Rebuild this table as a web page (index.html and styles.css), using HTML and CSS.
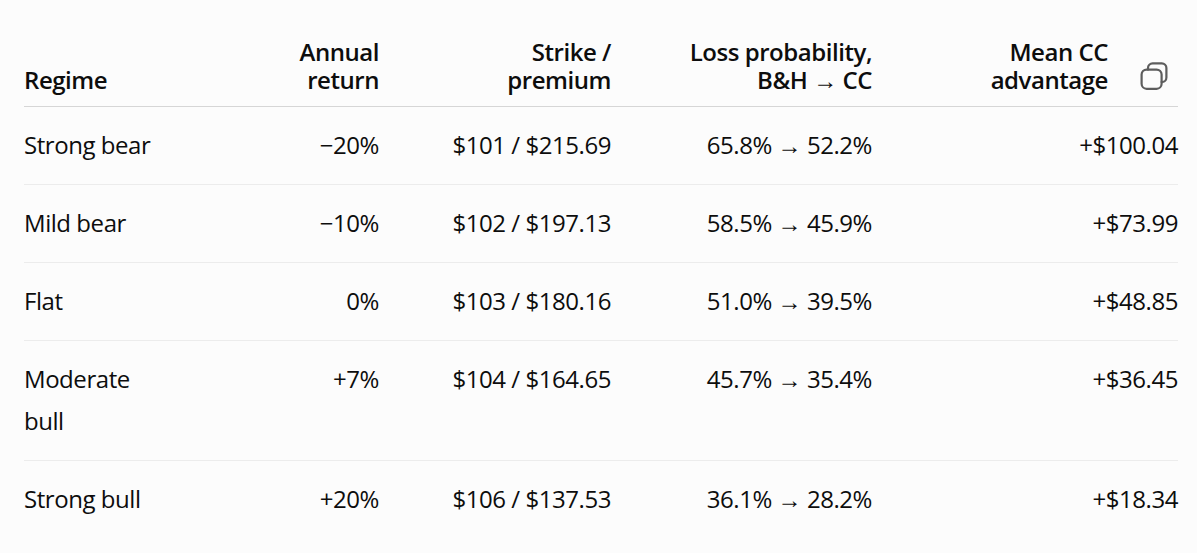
FILE: index.html
```html
<!DOCTYPE html>
<html lang="en">
<head>
<meta charset="utf-8">
<title>Covered call regimes</title>
<link rel="stylesheet" href="styles.css">
</head>
<body>
<div class="table-wrap">
  <table class="data-table">
    <colgroup>
      <col class="col-regime">
      <col class="col-return">
      <col class="col-strike">
      <col class="col-loss">
      <col class="col-adv">
    </colgroup>
    <thead>
      <tr>
        <th class="left">Regime</th>
        <th>Annual<br>return</th>
        <th>Strike /<br>premium</th>
        <th>Loss probability,<br>B&amp;H → CC</th>
        <th class="last">Mean CC<br>advantage</th>
      </tr>
    </thead>
    <tbody>
      <tr>
        <td class="left">Strong bear</td>
        <td>−20%</td>
        <td>$101 / $215.69</td>
        <td>65.8% → 52.2%</td>
        <td>+$100.04</td>
      </tr>
      <tr>
        <td class="left">Mild bear</td>
        <td>−10%</td>
        <td>$102 / $197.13</td>
        <td>58.5% → 45.9%</td>
        <td>+$73.99</td>
      </tr>
      <tr>
        <td class="left">Flat</td>
        <td>0%</td>
        <td>$103 / $180.16</td>
        <td>51.0% → 39.5%</td>
        <td>+$48.85</td>
      </tr>
      <tr>
        <td class="left">Moderate bull</td>
        <td>+7%</td>
        <td>$104 / $164.65</td>
        <td>45.7% → 35.4%</td>
        <td>+$36.45</td>
      </tr>
      <tr>
        <td class="left">Strong bull</td>
        <td>+20%</td>
        <td>$106 / $137.53</td>
        <td>36.1% → 28.2%</td>
        <td>+$18.34</td>
      </tr>
    </tbody>
  </table>
  <button class="copy-btn" type="button" aria-label="Copy table">
    <svg width="28" height="28" viewBox="0 0 28 28" fill="none" stroke="#5d5d5d" stroke-width="2.2" stroke-linecap="round" stroke-linejoin="round">
      <rect x="1.6" y="7.6" width="20" height="19.2" rx="5"/>
      <path d="M8 7.6 V6 a4.6 4.6 0 0 1 4.6 -4.6 H21.8 a4.6 4.6 0 0 1 4.6 4.6 V15.4 a4.6 4.6 0 0 1 -4.6 4.6 H21.6"/>
    </svg>
  </button>
</div>
</body>
</html>
```

FILE: styles.css
```css
html, body {
  margin: 0;
  padding: 0;
  background: #fcfcfc;
}

body {
  font-family: "Open Sans", "Noto Sans", "Liberation Sans", sans-serif;
  color: #0d0d0d;
  font-size: 24px;
  letter-spacing: -0.45px;
}

.table-wrap {
  position: relative;
  padding: 26px 19px 0 24px;
}

.data-table {
  width: 100%;
  border-collapse: collapse;
  table-layout: fixed;
}

.col-regime { width: 156px; }
.col-return { width: 199px; }
.col-strike { width: 232px; }
.col-loss { width: 261px; }

.data-table th {
  font-weight: 600;
  line-height: 28px;
  text-align: right;
  vertical-align: bottom;
  padding: 12px 0 12px 16px;
  border-bottom: 1px solid #d6d6d6;
}

.data-table th.last {
  padding-right: 70px;
}

.data-table td {
  font-weight: 400;
  line-height: 42px;
  text-align: right;
  vertical-align: top;
  padding: 17px 0 18px 16px;
  border-bottom: 1px solid #ececec;
}

.data-table tbody tr:last-child td {
  border-bottom: none;
}

.data-table .left {
  text-align: left;
  padding-left: 0;
  padding-right: 16px;
}

.copy-btn {
  position: absolute;
  top: 62px;
  right: 29px;
  width: 28px;
  height: 28px;
  padding: 0;
  border: none;
  background: transparent;
  display: flex;
}
```
